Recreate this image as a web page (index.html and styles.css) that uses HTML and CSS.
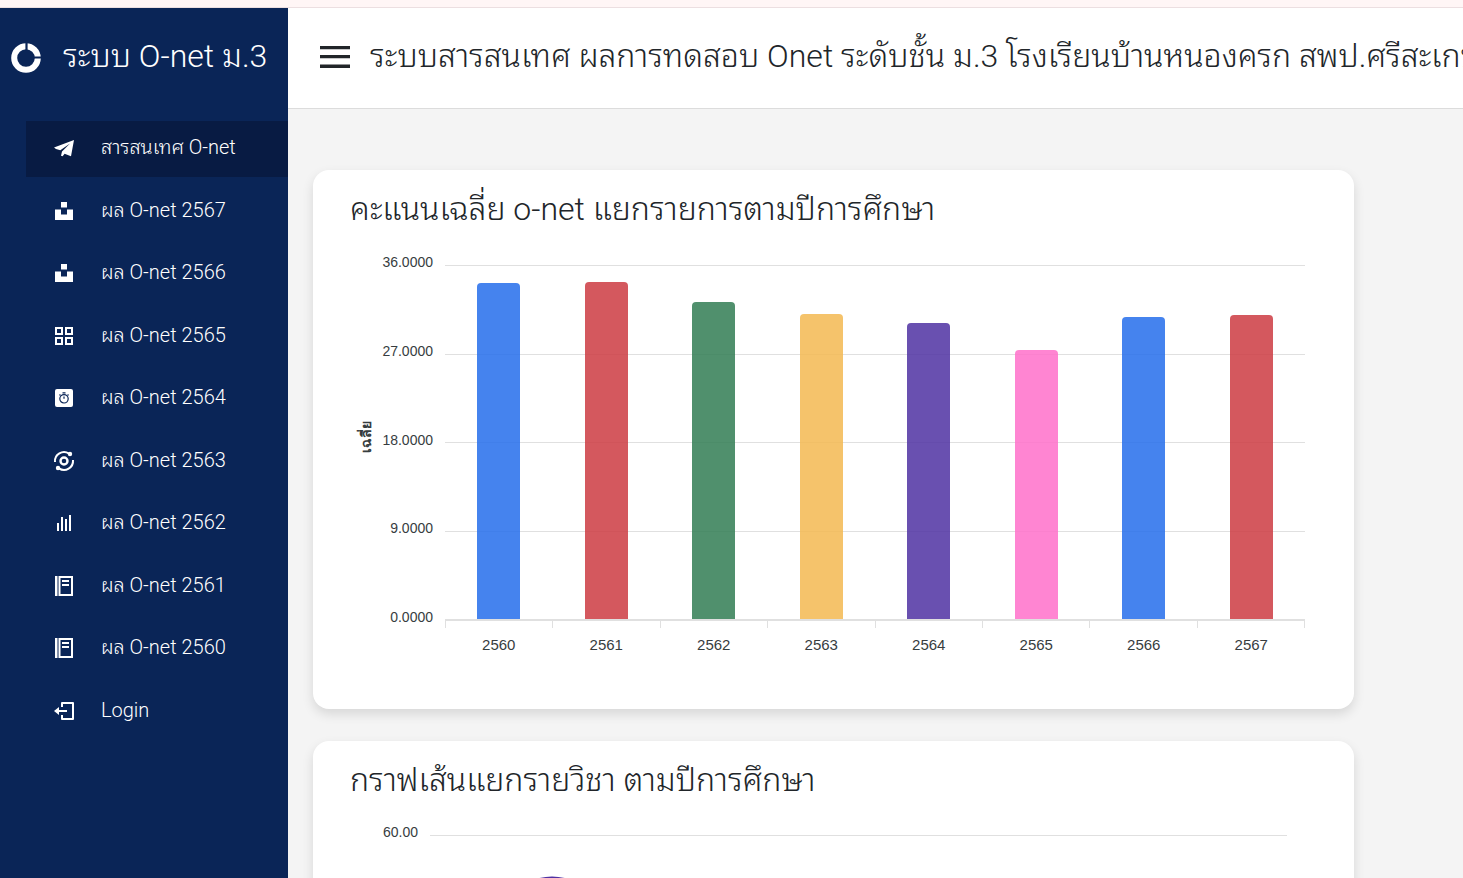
FILE: index.html
```html
<!DOCTYPE html>
<html lang="th">
<head>
<meta charset="utf-8">
<title>ระบบ O-net ม.3</title>
<link rel="stylesheet" href="styles.css">
</head>
<body>
<div class="topline"></div>
<div class="shell">
  <aside class="sidebar">
    <div class="brand">
      <svg class="brand-icon" viewBox="0 0 30 30"><circle cx="15" cy="15" r="11.8" fill="none" stroke="#fff" stroke-width="6"/><path d="M15.500 0v8M22 14.500h8" stroke="#0a2557" stroke-width="2.2"/></svg>
      <span class="brand-name">ระบบ O-net ม.3</span>
    </div>
    <nav>
      <ul class="menu">
        <li><a class="item active" href="#"><svg class="icon" viewBox="0 0 24 24"><path fill="#fff" d="M22 4 2 11.600l2 1.400 4.300 1.200L18 7.600l-8 7.800L9 19.800l1.600.4 2-2.400L19 20.200z"/></svg><span>สารสนเทศ O-net</span></a></li>
        <li><a class="item" href="#"><svg class="icon" viewBox="0 0 24 24"><path fill="#fff" d="M9 3h6v5.500H9zM3 10.500h6v5h6v-5h6V21H3z"/></svg><span>ผล O-net 2567</span></a></li>
        <li><a class="item" href="#"><svg class="icon" viewBox="0 0 24 24"><path fill="#fff" d="M9 3h6v5.500H9zM3 10.500h6v5h6v-5h6V21H3z"/></svg><span>ผล O-net 2566</span></a></li>
        <li><a class="item" href="#"><svg class="icon" viewBox="0 0 24 24"><path fill="none" stroke="#fff" stroke-width="2" d="M4 4h6v6H4zM14 4h6v6h-6zM4 14h6v6H4zM14 14h6v6h-6z"/></svg><span>ผล O-net 2565</span></a></li>
        <li><a class="item" href="#"><svg class="icon" viewBox="0 0 24 24"><rect x="3" y="3" width="18" height="18" rx="2" fill="#fff"/><g fill="none" stroke="#0a2557" stroke-width="1.200"><circle cx="12" cy="12.800" r="4.200"/><path d="M10.500 6.800h3M12 10.500v2.300M7.500 8.500l1 1M15.500 9.500l1-1"/></g></svg><span>ผล O-net 2564</span></a></li>
        <li><a class="item" href="#"><svg class="icon" viewBox="0 0 24 24"><g fill="none" stroke="#fff" stroke-width="2"><circle cx="12" cy="12" r="3.500" stroke-width="2.400"/><path d="M3 13a9 9 0 0 1 14-8.300M21 11a9 9 0 0 1-14 8.300"/></g><circle cx="18" cy="5" r="2.200" fill="#fff"/><circle cx="6" cy="19" r="2.200" fill="#fff"/></svg><span>ผล O-net 2563</span></a></li>
        <li><a class="item" href="#"><svg class="icon" viewBox="0 0 24 24"><path fill="#fff" d="M5 12h2v8H5zM9 6h2v14H9zM13 8h2v12h-2zM17 4h2v16h-2z"/></svg><span>ผล O-net 2562</span></a></li>
        <li><a class="item" href="#"><svg class="icon" viewBox="0 0 24 24"><path fill="#fff" d="M3 2h2.500v20H3zM10 6h7v2h-7zM10 10h7v2h-7z"/><path fill="none" stroke="#fff" stroke-width="2" d="M7.500 3H20v18H7.500z"/></svg><span>ผล O-net 2561</span></a></li>
        <li><a class="item" href="#"><svg class="icon" viewBox="0 0 24 24"><path fill="#fff" d="M3 2h2.500v20H3zM10 6h7v2h-7zM10 10h7v2h-7z"/><path fill="none" stroke="#fff" stroke-width="2" d="M7.500 3H20v18H7.500z"/></svg><span>ผล O-net 2560</span></a></li>
        <li><a class="item" href="#"><svg class="icon" viewBox="0 0 24 24"><path fill="#fff" d="M2 12l5-4v3h8v2H7v3z"/><path fill="none" stroke="#fff" stroke-width="2" stroke-linejoin="round" d="M10 8V4h11v16H10v-4"/></svg><span>Login</span></a></li>
      </ul>
    </nav>
  </aside>
  <div class="page">
    <header class="header">
      <button class="toggle" type="button" aria-label="เมนู"><svg class="toggle-icon" viewBox="0 0 30 22"><path fill="#212529" d="M0 0h30v3.200H0zM0 9h30v3.200H0zM0 18.500h30v3.500H0z"/></svg></button>
      <h1 class="title">ระบบสารสนเทศ ผลการทดสอบ Onet ระดับชั้น ม.3 โรงเรียนบ้านหนองครก สพป.ศรีสะเกษ</h1>
    </header>
    <main class="content">
      <section class="card">
        <h2 class="card-title">คะแนนเฉลี่ย o-net แยกรายการตามปีการศึกษา</h2>
        <div class="chart">
          <div class="axis-name">เฉลี่ย</div>
          <div class="scale"><span>36.0000</span><span>27.0000</span><span>18.0000</span><span>9.0000</span><span>0.0000</span></div>
          <div class="plot">
            <div class="lines"><i></i><i></i><i></i><i></i></div>
            <div class="bars">
              <div class="bar blue" style="height:94.9%"></div>
              <div class="bar red" style="height:95.3%"></div>
              <div class="bar green" style="height:89.6%"></div>
              <div class="bar yellow" style="height:86.3%"></div>
              <div class="bar purple" style="height:83.6%"></div>
              <div class="bar pink" style="height:76%"></div>
              <div class="bar blue" style="height:85.2%"></div>
              <div class="bar red" style="height:85.9%"></div>
            </div>
          </div>
          <div class="ticks"><i></i><i></i><i></i><i></i><i></i><i></i><i></i><i></i></div>
          <div class="years"><span>2560</span><span>2561</span><span>2562</span><span>2563</span><span>2564</span><span>2565</span><span>2566</span><span>2567</span></div>
        </div>
      </section>
      <section class="card">
        <h2 class="card-title">กราฟเส้นแยกรายวิชา ตามปีการศึกษา</h2>
        <div class="line-chart">
          <div class="scale"><span>60.00</span></div>
          <svg class="line-plot" width="857" height="120"><path d="M0 .5h857" stroke="#e0e0e0"/><path d="M54 90C80 60 96 43 122 43s44 17 70 47" fill="none" stroke="#4f31a2" stroke-width="3"/></svg>
        </div>
      </section>
    </main>
  </div>
</div>
</body>
</html>
```
FILE: styles.css
```css
* { box-sizing: border-box; }
body {
  margin: 0;
  height: 100vh;
  display: flex;
  flex-direction: column;
  overflow: hidden;
  background: #f4f4f4;
  color: #212529;
  font-family: Roboto, "Noto Sans Thai Looped", "Noto Sans Thai", "Liberation Sans", sans-serif;
  font-weight: 300;
}
.topline { flex: none; height: 8px; background: #fff6f6; border-bottom: 1px solid #ecdfe1; }
.shell { flex: 1; min-height: 0; display: flex; }
.sidebar { flex: none; width: 288px; background: #0a2557; color: #fff; }
.brand { display: flex; align-items: center; gap: 22px; height: 100px; padding-left: 11px; }
.brand-icon { width: 30px; height: 30px; }
.brand-name { font-size: 32px; line-height: 40px; padding-bottom: 4px; white-space: nowrap; }
.menu {
  list-style: none;
  margin: 13px 0 0;
  padding: 0 0 0 26px;
  height: 619px;
  display: flex;
  flex-direction: column;
  justify-content: space-between;
}
.item {
  display: flex;
  align-items: center;
  gap: 25px;
  height: 56px;
  padding: 0 0 2px 26px;
  color: #fff;
  font-size: 20px;
  line-height: 28px;
  text-decoration: none;
  white-space: nowrap;
}
.item span { padding-bottom: 2px; }
.item.active { background: #081b43; }
.icon { width: 24px; height: 24px; flex: none; }
.page { flex: 1; min-width: 0; overflow: hidden; }
.header {
  display: flex;
  align-items: center;
  gap: 20px;
  height: 101px;
  padding: 0 0 2px 32px;
  background: #fff;
  border-bottom: 1px solid #dcdcdc;
  overflow: hidden;
}
.toggle { flex: none; display: flex; padding: 0; border: 0; background: none; }
.toggle-icon { width: 30px; height: 22px; }
.title { margin: 0; padding-bottom: 2px; font-size: 32px; line-height: 40px; font-weight: 300; white-space: nowrap; }
.content { display: flex; flex-direction: column; gap: 32px; padding: 61px 109px 0 25px; }
.card {
  height: 539px;
  padding: 15px 37px;
  background: #fff;
  border-radius: 16px;
  box-shadow: 0 5px 12px rgba(0, 0, 0, .12);
}
.card-title { margin: 0; font-size: 32px; line-height: 48px; font-weight: 300; white-space: nowrap; }
.chart {
  display: grid;
  grid-template-columns: 26px 57px 1fr;
  grid-template-rows: 354px auto auto;
  padding: 32px 12px 0 0;
  font-family: "Liberation Sans", sans-serif;
  font-weight: 400;
  color: #373d3f;
}
.axis-name {
  writing-mode: vertical-rl;
  transform: rotate(180deg);
  align-self: center;
  justify-self: end;
  padding-top: 10px;
  font-size: 14px;
  line-height: 20px;
  font-weight: 700;
}
.scale {
  display: flex;
  flex-direction: column;
  justify-content: space-between;
  margin: -11px 0 -5px;
  font-size: 14px;
  line-height: 16px;
  text-align: right;
}
.chart .scale { margin-bottom: -6px; }
.plot { display: grid; margin-left: 12px; border-bottom: 2px solid #e0e0e0; margin-bottom: -2px; }
.lines, .bars { grid-area: 1 / 1; display: flex; }
.lines { flex-direction: column; }
.lines i { flex: 1; border-top: 1px solid #e0e0e0; }
.bars { align-items: flex-end; justify-content: space-around; }
.bar { width: 5%; border-radius: 4px 4px 0 0; opacity: .85; }
.blue { background: #246deb; }
.red { background: #cc3b42; }
.green { background: #317c54; }
.yellow { background: #f3b851; }
.purple { background: #4f31a2; }
.pink { background: #ff70ca; }
.ticks, .years { grid-column: 3; display: flex; margin-left: 12px; }
.ticks { height: 9px; border-right: 1px solid #e0e0e0; }
.ticks i { flex: 1; border-left: 1px solid #e0e0e0; }
.years { padding-top: 7px; font-size: 15px; line-height: 20px; text-align: center; }
.years span { flex: 1; }
.line-chart {
  display: flex;
  gap: 12px;
  padding: 31px 30px 0 33px;
  font-family: "Liberation Sans", sans-serif;
  font-weight: 400;
  color: #373d3f;
}
.line-plot { flex: none; }
```
